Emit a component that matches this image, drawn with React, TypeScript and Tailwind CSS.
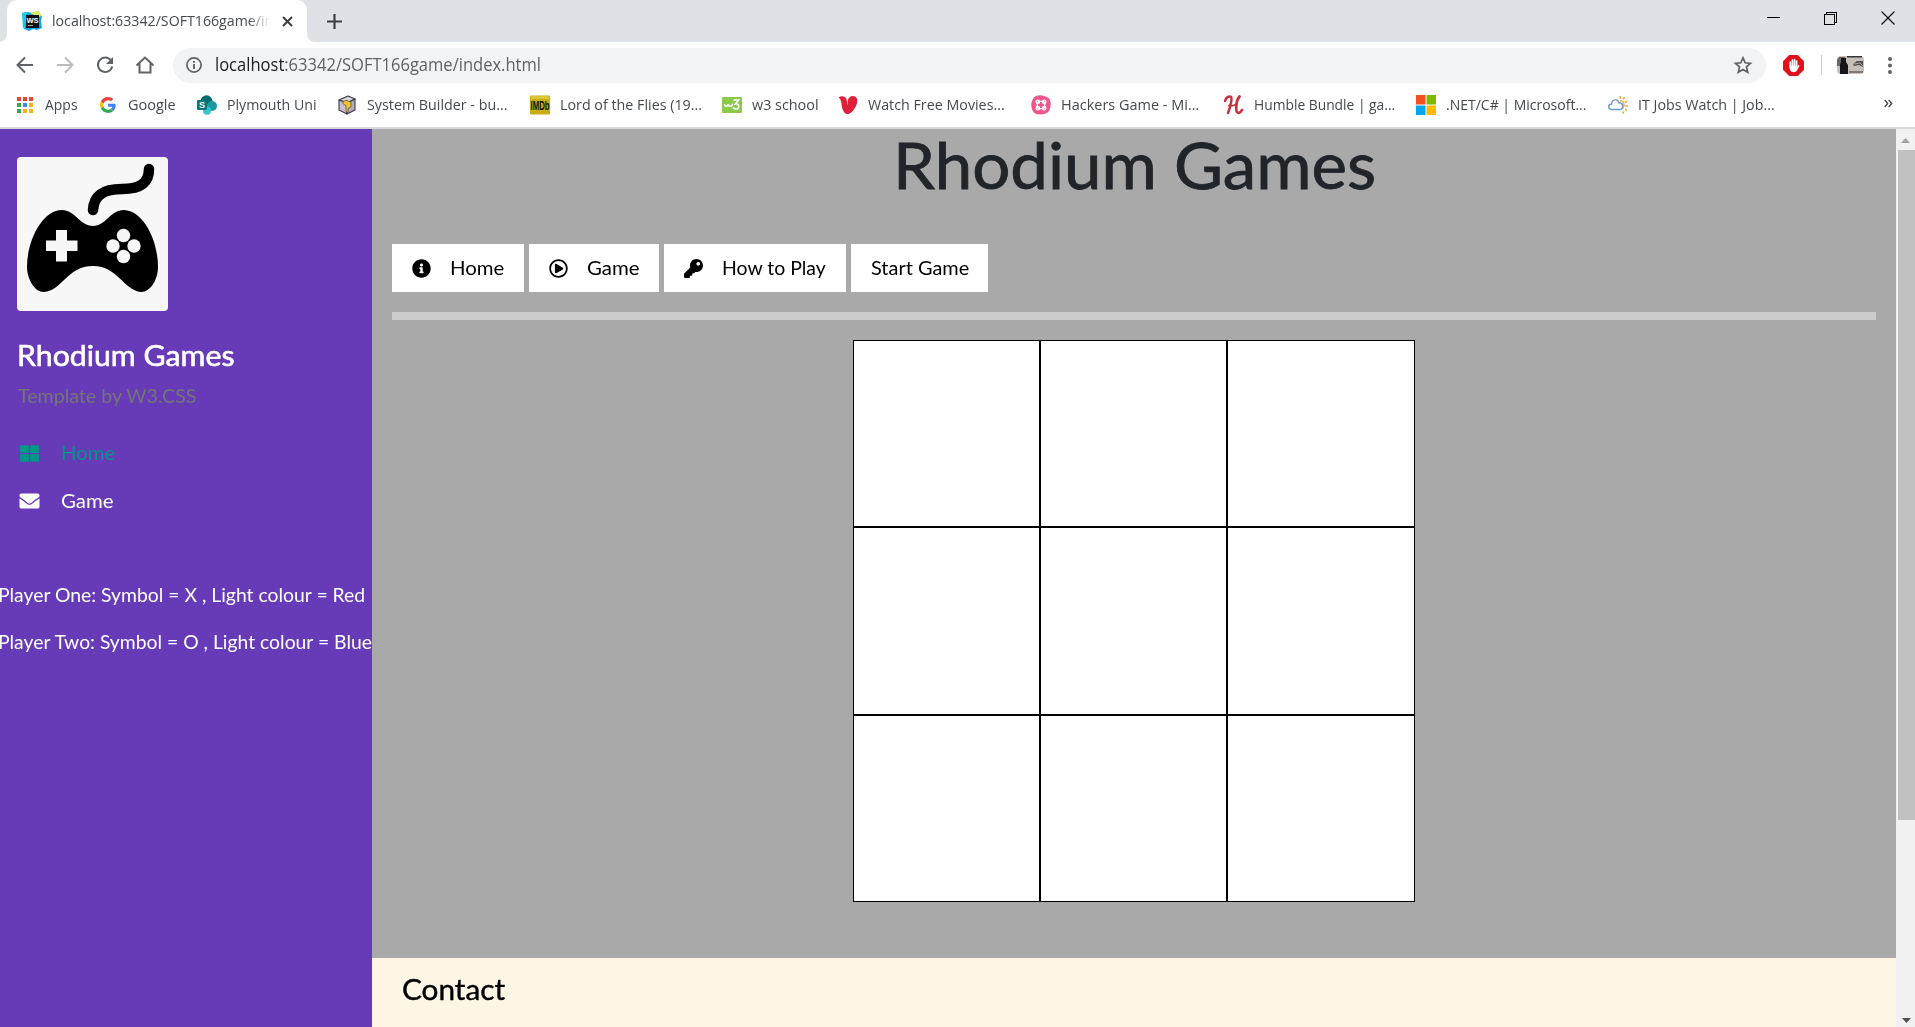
import React, { useLayoutEffect, useRef, useState } from "react";
import { FaInfoCircle, FaRegPlayCircle, FaKey, FaEnvelope, FaThLarge } from "react-icons/fa";

/** A single line of text stretched horizontally to fill the given width. */
function Line({ text, width, className = "", children }: { text: string; width: number; className?: string; children?: React.ReactNode }) {
  const ref = useRef<HTMLSpanElement>(null);
  const [scale, setScale] = useState(1);
  useLayoutEffect(() => {
    if (ref.current) setScale(width / ref.current.offsetWidth);
  }, [text, width]);
  return (
    <span className={"block shrink-0 whitespace-nowrap " + className} style={{ width }}>
      <span ref={ref} className="inline-block origin-left" style={{ transform: `scaleX(${scale})` }}>
        {children ?? text}
      </span>
    </span>
  );
}

const AppsIcon = () => (
  <svg width="20" height="20" viewBox="0 0 20 20">
    {["#ea4335", "#ea4335", "#ea4335", "#34a853", "#4285f4", "#fbaf17", "#34a853", "#fbaf17", "#fbaf17"].map((c, i) => (
      <rect key={i} x={2 + (i % 3) * 6} y={2 + Math.floor(i / 3) * 6} width="4" height="4" fill={c} />
    ))}
  </svg>
);

const GoogleIcon = () => (
  <svg width="16" height="16" viewBox="0 0 48 48">
    <path fill="#EA4335" d="M24 9.5c3.54 0 6.71 1.22 9.21 3.6l6.85-6.85C35.9 2.38 30.47 0 24 0 14.62 0 6.51 5.38 2.56 13.22l7.98 6.19C12.43 13.72 17.74 9.5 24 9.5z" />
    <path fill="#4285F4" d="M46.98 24.55c0-1.57-.15-3.09-.38-4.55H24v9.02h12.94c-.58 2.96-2.26 5.48-4.78 7.18l7.73 6c4.51-4.18 7.09-10.36 7.09-17.65z" />
    <path fill="#FBBC05" d="M10.53 28.59A14.5 14.5 0 0 1 9.77 24c0-1.6.27-3.14.76-4.59l-7.98-6.19A23.9 23.9 0 0 0 0 24c0 3.88.92 7.54 2.56 10.78l7.97-6.19z" />
    <path fill="#34A853" d="M24 48c6.48 0 11.93-2.13 15.89-5.81l-7.73-6c-2.15 1.45-4.92 2.3-8.16 2.3-6.26 0-11.57-4.22-13.47-9.91l-7.98 6.19C6.51 42.62 14.62 48 24 48z" />
  </svg>
);

const SharePointIcon = () => (
  <svg width="20" height="20" viewBox="0 0 20 20">
    <circle cx="9.5" cy="6" r="5.8" fill="#036c70" />
    <circle cx="15" cy="11" r="5" fill="#1a9ba1" />
    <circle cx="10" cy="15.7" r="4" fill="#37c6d0" />
    <rect y="5" width="10" height="10" rx="1" fill="#03787c" />
    <text x="5" y="13.3" fontSize="9" fontWeight="700" fontFamily="Liberation Sans, sans-serif" textAnchor="middle" fill="#fff">S</text>
  </svg>
);

const CubeIcon = () => (
  <svg width="20" height="20" viewBox="0 0 20 20" stroke="#3d3844" strokeWidth="1.1" strokeLinejoin="round">
    <path d="M2 5 11 1l7 3-8 4z" fill="#d6d3d9" />
    <path d="M2 5l8 3v11L2 15z" fill="#c5c1c9" />
    <path d="M10 8l8-4v11l-8 4z" fill="#b3adb8" />
    <path d="M6 6.500l3-1.200 5 1.700v5l-3 1.500v4l-2-1v-6L6 9z" fill="#f0c22c" strokeWidth=".6" />
  </svg>
);

const ImdbIcon = () => (
  <svg width="20" height="20" viewBox="0 0 20 20">
    <rect y="0.500" width="20" height="19" rx="1" fill="#c9ad12" />
    <rect x="1" y="1" width="18" height="3" fill="#dcc534" />
    <text x="10" y="14.500" fontSize="12" fontWeight="700" fontFamily="Liberation Sans, sans-serif" textAnchor="middle" textLength="19" lengthAdjust="spacingAndGlyphs" fill="#111">IMDb</text>
  </svg>
);

const W3Icon = () => (
  <svg width="20" height="20" viewBox="0 0 20 20">
    <rect y="2" width="20" height="16" rx="1" fill="#8cc84b" />
    <path d="M2.500 9c0 3 3.500 3 3.500 0 0 3 4.500 3 4.500-.5" fill="none" stroke="#fff" strokeWidth="1.500" />
    <path d="M11.500 5h5l-3 3.800c4-.5 4.500 5.200.5 5.200-1.500 0-2.300-.6-2.800-1.500" fill="none" stroke="#fff" strokeWidth="1.700" />
  </svg>
);

const VIcon = () => (
  <svg width="20" height="20" viewBox="0 0 20 20">
    <path d="M0.500 2.500C3 .5 7 .8 8.500 4l1.200 6.500C10 7 9 4 12 2c2.500-2 7-.5 7.300 3C19.700 10 15 17.500 10.500 19 6.500 19.500 5 16 4 12 3.200 8 3.500 4.500.5 2.500z" fill="#e0203a" />
  </svg>
);

const HackersIcon = () => (
  <svg width="20" height="20" viewBox="0 0 20 20">
    <path d="M5 1C9-.4 13 .4 17.500 3c2.800 3 2.800 8 .8 12.500C15.500 19.500 9 20.500 4 18.500 1 16 0 12 .3 8.500 1 5 2.500 2.300 5 1z" fill="#f0568c" />
    <g fill="none" stroke="#fff" strokeWidth="1.300">
      <rect x="6.300" y="6.300" width="7.400" height="7.400" rx="2.500" />
      <circle cx="6.800" cy="6.800" r="1.700" /><circle cx="13.200" cy="6.800" r="1.700" />
      <circle cx="6.800" cy="13.200" r="1.700" /><circle cx="13.200" cy="13.200" r="1.700" />
    </g>
  </svg>
);

const HumbleIcon = () => (
  <svg width="20" height="20" viewBox="0 0 20 20" fill="none" stroke="#c9323e" strokeLinecap="round">
    <path d="M1 6C2 2 5 1 7 1.800 8.500 4 6 13 4 18" strokeWidth="2.500" />
    <path d="M15.500 1.500C12.500 5 12 12 12.500 16c.8 3 4 2 5.500-1" strokeWidth="2.700" />
    <path d="M5 10.500c4 .5 5-.5 8-1" strokeWidth="1.800" />
  </svg>
);

const MicrosoftIcon = () => (
  <svg width="20" height="20" viewBox="0 0 20 20">
    <rect width="9.500" height="9.500" fill="#f25022" /><rect x="10.500" width="9.500" height="9.500" fill="#7fba00" />
    <rect y="10.500" width="9.500" height="9.500" fill="#00a4ef" /><rect x="10.500" y="10.500" width="9.500" height="9.500" fill="#ffb900" />
  </svg>
);

const WeatherIcon = () => (
  <svg width="20" height="20" viewBox="0 0 20 20" fill="none">
    <path d="M12 5.800c4-.8 5.800 5.700 1.500 8" stroke="#f3b04c" strokeWidth="1.600" />
    <path d="M12 1.200l.4 2.600M16.500 2l-1.200 2.300M19.300 6.200l-2.400 1M20 11h-2.700M19 15.500l-2-1.500M15.500 18.800l-.8-2.300" stroke="#f0a23a" strokeWidth="1.500" />
    <path d="M3.500 14.500C-.5 14 0 9 3.600 9 4 4 10 3.500 11 7.800c5 0 4.500 6.700.5 6.700z" stroke="#7096cf" strokeWidth="1.400" fill="#fff" />
  </svg>
);

const bookmarks = [
  { label: "Apps", width: 33, cell: "w-[83px]", Icon: AppsIcon },
  { label: "Google", width: 48, cell: "w-[99px]", Icon: GoogleIcon },
  { label: "Plymouth Uni", width: 90, cell: "w-[140px]", Icon: SharePointIcon },
  { label: "System Builder - bu...", width: 140, cell: "w-[193px]", Icon: CubeIcon },
  { label: "Lord of the Flies (19...", width: 142, cell: "w-[192px]", Icon: ImdbIcon },
  { label: "w3 school", width: 67, cell: "w-[116px]", Icon: W3Icon },
  { label: "Watch Free Movies...", width: 137, cell: "w-[193px]", Icon: VIcon },
  { label: "Hackers Game - Mi...", width: 138, cell: "w-[193px]", Icon: HackersIcon },
  { label: "Humble Bundle | ga...", width: 141, cell: "w-[192px]", Icon: HumbleIcon },
  { label: ".NET/C# | Microsoft...", width: 140, cell: "w-[192px]", Icon: MicrosoftIcon },
  { label: "IT Jobs Watch | Job...", width: 137, cell: "w-[180px]", Icon: WeatherIcon },
];

function TabStrip() {
  return (
    <div className="flex h-[42px] shrink-0 bg-[#dee1e6]">
      <div className="relative ml-[7px] flex h-full w-[300px] items-center rounded-t-[10px] bg-white pl-[15px]">
        <svg className="absolute bottom-0 -left-[8px]" width="8" height="8"><path d="M8 0v8H0a8 8 0 0 0 8-8z" fill="#fff" /></svg>
        <svg className="absolute -right-[8px] bottom-0" width="8" height="8"><path d="M0 0v8h8a8 8 0 0 1-8-8z" fill="#fff" /></svg>
        <svg width="20" height="20" viewBox="0 0 20 20">
          <path d="M0 2l6-1 4 1 6-2 4 5-1 6 1 6-5 2-4-1-4 2-5-2 1-6z" fill="#07a7e4" />
          <path d="M8 2l8-2 4 5-4 1z" fill="#dff052" /><path d="M0 2l5-1-1 12-3 5z" fill="#15c9e8" />
          <rect x="4" y="4" width="13" height="13" fill="#111" />
          <text x="10.500" y="11.500" fontSize="7.500" fontWeight="700" textAnchor="middle" fontFamily="Liberation Sans, sans-serif" fill="#fff">WS</text>
          <path d="M6 14.500h5" stroke="#aaa" />
        </svg>
        <div className="ml-[10px] w-[218px] overflow-hidden [mask-image:linear-gradient(to_right,black_90%,transparent_100%)]">
          <Line text="localhost:63342/SOFT166game/in" width={221} className="text-[14.5px] leading-[22px] text-[#45494d]" />
        </div>
        <svg className="ml-[12px]" width="11" height="11" viewBox="0 0 11 11" stroke="#3c4043" strokeWidth="2"><path d="M1 1l9 9M10 1l-9 9" /></svg>
      </div>
      <svg className="mt-[14px] ml-[20px]" width="15" height="15" viewBox="0 0 15 15" stroke="#3c4043" strokeWidth="2.200"><path d="M7.500 0v15M0 7.500h15" /></svg>
      <div className="mt-[11px] mr-[20px] ml-auto flex gap-[42px]">
        <svg width="14" height="14" shapeRendering="crispEdges"><path d="M0 6.500h13" stroke="#000" /></svg>
        <svg className="ml-px" width="14" height="14" fill="none" stroke="#000" shapeRendering="crispEdges"><path d="M.5 3.500h10v10h-10zM2.500 3.500v-2h10v10h-2" strokeWidth="1.200" /></svg>
        <svg className="ml-px" width="14" height="14" stroke="#000" strokeWidth="1.100"><path d="M.5 .5l13 13M13.500 .5l-13 13" /></svg>
      </div>
    </div>
  );
}

function Toolbar() {
  return (
    <div className="flex h-[46px] shrink-0 items-center bg-white">
      <div className="flex w-[173px] gap-[20px] pl-[15px]">
        <svg width="20" height="20" viewBox="0 0 20 20" fill="none" stroke="#5f6368" strokeWidth="2"><path d="M18 10H3M10 2.500L2.500 10l7.500 7.500" /></svg>
        <svg width="20" height="20" viewBox="0 0 20 20" fill="none" stroke="#babcbe" strokeWidth="2"><path d="M2 10h15M10 2.500l7.500 7.500-7.500 7.500" /></svg>
        <svg width="20" height="20" viewBox="0 0 20 20" fill="none" stroke="#5f6368" strokeWidth="2"><path d="M16 5.500a7.200 7.200 0 1 0 1.200 6" /><path d="M18 2v7h-7z" fill="#5f6368" stroke="none" /></svg>
        <svg width="20" height="20" viewBox="0 0 20 20" fill="none" stroke="#5f6368" strokeWidth="2"><path d="M1.500 10.500L10 2.500l8.500 8M4.500 8.500v9h11v-9" /></svg>
      </div>
      <div className="flex h-[35px] w-[1593px] items-center rounded-full bg-[#f1f3f4] pl-[13px]">
        <svg width="16" height="16" viewBox="0 0 16 16" fill="none" stroke="#5f6368" strokeWidth="1.700"><circle cx="8" cy="8" r="7.100" /><path d="M8 7v5M8 4v1.700" strokeWidth="1.900" /></svg>
        <Line text="localhost:63342/SOFT166game/index.html" width={326} className="mb-[2px] ml-[13px] text-[17.5px] leading-[24px] text-[#5f6368]">
          <span className="text-[#202124]">localhost</span>:63342/SOFT166game/index.html
        </Line>
        <svg className="mr-[13px] ml-auto" width="20" height="20" viewBox="0 0 20 20" fill="none" stroke="#5f6368" strokeWidth="1.700"><path d="M10 2.800l2.200 5 5.300.5-4 3.600 1.200 5.300L10 14.400l-4.700 2.800 1.200-5.300-4-3.600 5.300-.5z" /></svg>
      </div>
      <svg className="ml-[17px]" width="21" height="21" viewBox="0 0 21 21">
        <path d="M6.200 0h8.600L21 6.200v8.600L14.800 21H6.200L0 14.800V6.200z" fill="#e0101c" />
        <path d="M7.300 7v5M9.400 5v6M11.500 4.500v7M13.600 6V11" stroke="#fff" strokeWidth="1.700" strokeLinecap="round" />
        <path d="M6.500 10.500h7.900v1l1.200-1.500 1 .8-2.300 4.200c-1.500 3-6 3-7.200 0-.6-1.600-.6-3-.6-4.500z" fill="#fff" />
      </svg>
      <div className="ml-[17px] h-[20px] w-px bg-[#c8cacd]" />
      <svg className="ml-[15px]" width="27" height="18" viewBox="0 0 27 18">
        <rect width="27" height="18" rx="4" fill="#c9bfb9" /><path d="M0 4l2-3h6v5L3 10H0z" fill="#676765" />
        <path d="M4 2h5v4l2 3v9H3V9l1-3z" fill="#15151a" /><path d="M16 8l4-3h6v6l-4-2-5 1z" fill="#56534f" />
        <path d="M17 8l6-1 3 3" stroke="#aaa29b" fill="none" /><path d="M12 15h14v2H12z" fill="#807975" /><path d="M10 0h15v1.500H10z" fill="#353337" />
      </svg>
      <svg className="ml-[24px]" width="4" height="17" viewBox="0 0 4 17" fill="#5f6368"><circle cx="2" cy="2" r="2" /><circle cx="2" cy="8.500" r="2" /><circle cx="2" cy="15" r="2" /></svg>
    </div>
  );
}

function BookmarksBar() {
  return (
    <div className="flex h-[41px] shrink-0 border-b-2 border-[#d8d8d8] bg-white pb-[5px] pl-[15px] text-[14.8px] text-[#45494d]">
      {bookmarks.map(({ label, width, cell, Icon }) => (
        <div key={label} className={"flex shrink-0 items-center gap-[10px] " + cell}>
          <span className="flex w-[20px] shrink-0 justify-center"><Icon /></span>
          <Line text={label} width={width} className="mb-[2px] leading-[22px]" />
        </div>
      ))}
      <svg className="mt-[11px] mr-[22px] ml-auto" width="9" height="9" fill="none" stroke="#45494d" strokeWidth="1.400"><path d="M.7 1l3 3.500-3 3.500M4.700 1l3 3.500-3 3.500" /></svg>
    </div>
  );
}

function Sidebar() {
  return (
    <aside className="flex w-[372px] shrink-0 flex-col overflow-hidden bg-[#673ab7] text-[18.5px] text-white">
      <svg className="mt-[28px] ml-[17px] shrink-0" width="151" height="154" viewBox="0 0 151 154">
        <rect width="151" height="154" rx="4" fill="#f7f7f7" />
        <path d="M76 53C77 37 88 32 105 32C120 32 132 28 132 12" fill="none" stroke="#000" strokeWidth="10.500" strokeLinecap="round" />
        <path d="M45 53C58 53 63 69 76 69C89 69 93 53 107 53C127 54 141 84 141 110C141 122 134 135 124 135C106 133 101 109 76 109C50 109 45 134 27 135C17 135 10 121 10 110C10 84 25 53 45 53z" />
        <path d="M39 73h11v10.500h10.500V94H50v10.500H39V94H29V83.500h10z" fill="#f7f7f7" />
        <g fill="#f7f7f7"><circle cx="106.500" cy="78.500" r="6.700" /><circle cx="96" cy="89" r="6.700" /><circle cx="117" cy="89" r="6.700" /><circle cx="106.500" cy="99.500" r="6.700" /></g>
      </svg>
      <Line text="Rhodium Games" width={217} className="mt-[25px] ml-[16.5px] text-[29px] leading-[38px] [-webkit-text-stroke:0.600px_white]" />
      <Line text="Template by W3.CSS" width={179} className="mt-[9px] ml-[18px] leading-[26px] text-[#757575]" />
      <div className="mt-[20px] flex h-[48px] shrink-0 items-center pl-[20px] text-[#009688]">
        <FaThLarge className="h-[19px] w-[19px] shrink-0" />
        <Line text="Home" width={54} className="mt-px ml-[22px]" />
      </div>
      <div className="flex h-[48px] shrink-0 items-center pl-[19px]">
        <FaEnvelope className="h-[20px] w-[21px] shrink-0" />
        <Line text="Game" width={53} className="mt-px ml-[21px]" />
      </div>
      <Line text="Player One: Symbol = X , Light colour = Red" width={367} className="mt-[56px] -ml-[2px] leading-[28px]" />
      <Line text="Player Two: Symbol = O , Light colour = Blue" width={374} className="mt-[19px] -ml-[2px] leading-[28px]" />
    </aside>
  );
}

const navClass = "flex h-[48px] items-center bg-white pl-[20px]";

function Main() {
  return (
    <main className="flex min-w-0 flex-1 flex-col bg-[#a9a9a9]">
      <div className="flex h-[829px] shrink-0 flex-col">
        <h1 className="flex h-[71px] shrink-0 justify-center text-[#212529]">
          <Line text="Rhodium Games" width={483} className="text-[64px] leading-[71px] [-webkit-text-stroke:0.800px_#212529]" />
        </h1>
        <nav className="mt-[44px] ml-[20px] flex gap-[5px] text-[18.5px] text-black">
          <div className={navClass + " w-[132px]"}><FaInfoCircle className="h-[19px] w-[19px]" /><Line text="Home" width={54} className="mt-[2px] ml-[19px]" /></div>
          <div className={navClass + " w-[130px]"}><FaRegPlayCircle className="h-[19px] w-[19px]" /><Line text="Game" width={53} className="mt-[2px] ml-[19px]" /></div>
          <div className={navClass + " w-[182px]"}><FaKey className="h-[19px] w-[19px]" /><Line text="How to Play" width={104} className="mt-[2px] ml-[19px]" /></div>
          <div className={navClass + " w-[137px]"}><Line text="Start Game" width={98} className="mt-[2px]" /></div>
        </nav>
        <div className="mt-[20px] mr-[20px] ml-[20px] h-[8px] shrink-0 bg-[#cccccc]" />
        <div className="mt-[20px] grid shrink-0 grid-cols-[187px_187px_188px] grid-rows-[187px_188px_187px] self-center">
          {Array.from({ length: 9 }, (_, i) => <div key={i} className="border border-black bg-white" />)}
        </div>
      </div>
      <footer className="flex-1 bg-[#fdf5e6] pt-[12px] pl-[30px] text-black">
        <Line text="Contact" width={103} className="text-[28px] leading-[38px] [-webkit-text-stroke:0.400px_black]" />
      </footer>
    </main>
  );
}

function Scrollbar() {
  return (
    <div className="flex w-[19px] shrink-0 flex-col items-center bg-[#f1f1f1]">
      <svg className="mt-[9px] shrink-0" width="9" height="5"><path d="M0 5l4.500-5L9 5z" fill="#a3a3a3" /></svg>
      <div className="mt-[7px] ml-[2px] h-[670px] w-[17px] shrink-0 bg-[#c1c1c1]" />
      <svg className="mt-auto mb-[4px] ml-[2px] shrink-0" width="9" height="5"><path d="M0 0l4.500 5L9 0z" fill="#505050" /></svg>
    </div>
  );
}

export default function App() {
  return (
    <div className="flex h-screen w-full flex-col overflow-hidden font-['Open_Sans',sans-serif]">
      <TabStrip />
      <Toolbar />
      <BookmarksBar />
      <div className="flex min-h-0 flex-1 font-['Lato',sans-serif]">
        <Sidebar />
        <Main />
        <Scrollbar />
      </div>
    </div>
  );
}
